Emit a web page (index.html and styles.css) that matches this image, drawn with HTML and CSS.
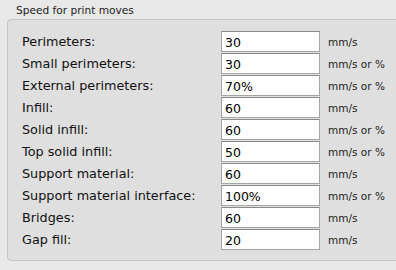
FILE: index.html
```html
<!DOCTYPE html>
<html lang="en">
<head>
    <meta charset="UTF-8">
    <title>Speed for print moves</title>
    <link rel="stylesheet" href="styles.css">
</head>
<body>
    <div class="group-title">Speed for print moves</div>
    <div class="group">
        <div class="row"><label>Perimeters:</label><input type="text" value="30"><span class="unit">mm/s</span></div>
        <div class="row"><label>Small perimeters:</label><input type="text" value="30"><span class="unit">mm/s or %</span></div>
        <div class="row"><label>External perimeters:</label><input type="text" value="70%"><span class="unit">mm/s or %</span></div>
        <div class="row"><label>Infill:</label><input type="text" value="60"><span class="unit">mm/s</span></div>
        <div class="row"><label>Solid infill:</label><input type="text" value="60"><span class="unit">mm/s or %</span></div>
        <div class="row"><label>Top solid infill:</label><input type="text" value="50"><span class="unit">mm/s or %</span></div>
        <div class="row"><label>Support material:</label><input type="text" value="60"><span class="unit">mm/s</span></div>
        <div class="row"><label>Support material interface:</label><input type="text" value="100%"><span class="unit">mm/s or %</span></div>
        <div class="row"><label>Bridges:</label><input type="text" value="60"><span class="unit">mm/s</span></div>
        <div class="row"><label>Gap fill:</label><input type="text" value="20"><span class="unit">mm/s</span></div>
    </div>
</body>
</html>
```

FILE: styles.css
```css
body {
    margin: 0;
    background-color: #e8e8e8;
    font-family: 'DejaVu Sans', sans-serif;
    color: #111;
    overflow: hidden;
}
.group-title {
    font-size: 10.6px;
    line-height: 13px;
    padding: 4px 0 0 16px;
    height: 15px;
    color: #222;
}
.group {
    margin-left: 7px;
    margin-right: -10px;
    height: 242px;
    box-sizing: border-box;
    padding: 11px 0 0 14px;
    background-color: #dfdfdf;
    border: 1px solid #c6c6c6;
    border-radius: 4px;
    display: flex;
    flex-direction: column;
    gap: 1px;
}
.row {
    display: flex;
    align-items: center;
    height: 21px;
}
.row label {
    width: 199px;
    font-size: 12.8px;
}
.row input {
    width: 99px;
    height: 21px;
    box-sizing: border-box;
    margin: 0;
    padding: 1px 3px 0;
    border: 1px solid #a4a4a4;
    border-top-color: #8a8a8a;
    background: #fff;
    font-family: 'DejaVu Sans', sans-serif;
    font-size: 12.5px;
    color: #000;
    outline: none;
}
.row .unit {
    margin-left: 8px;
    font-size: 10.5px;
    color: #222;
}
```
